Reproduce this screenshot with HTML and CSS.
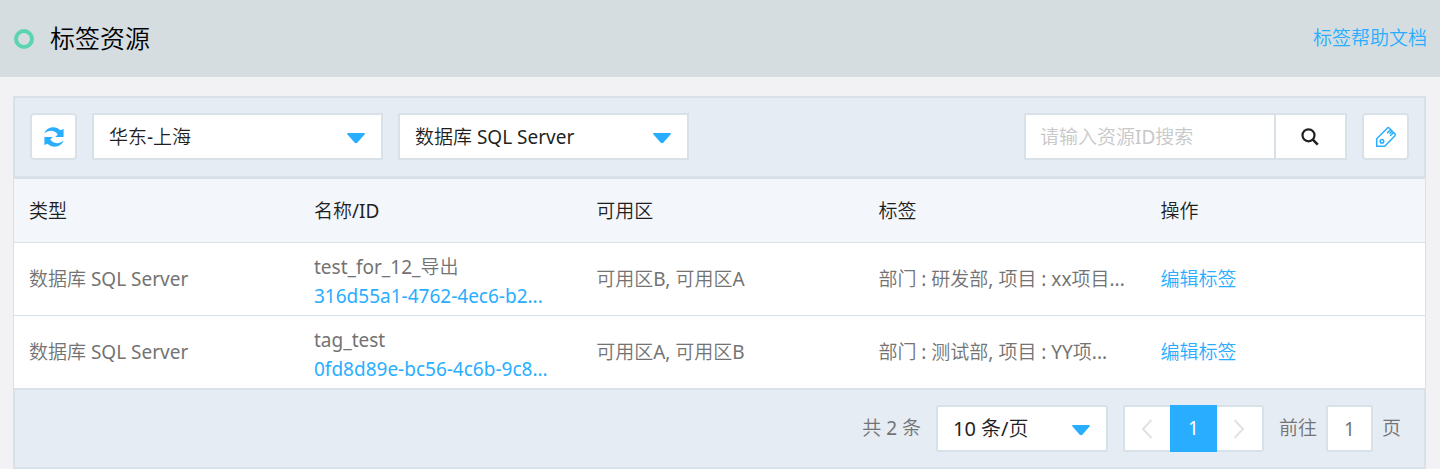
FILE: index.html
```html
<!DOCTYPE html>
<html lang="zh-CN">
<head>
<meta charset="utf-8">
<title>标签资源</title>
<link rel="stylesheet" href="styles.css">
</head>
<body>
<header class="page-header">
  <span class="ring"></span>
  <h1 class="title">标签资源</h1>
  <a class="link" href="#help">标签帮助文档</a>
</header>
<main class="content">
  <div class="toolbar">
    <button class="icon-button" type="button" aria-label="刷新">
      <svg width="20" height="20" viewBox="0 0 20 20" fill="currentColor"><path d="M.3 6.500C2 2.500 5.200.3 9.200.3c2.800 0 5.200 1 7.200 2.900L19.600 2v8h-8.400l2.600-2.600C10.500 3 5 2.700.3 6.500z"/><path d="M19.700 13.500c-1.700 4-4.900 6.200-8.900 6.200-2.800 0-5.200-1-7.200-2.900L.4 18v-8h8.400l-2.600 2.600c3.300 4.400 8.800 4.700 13.500.9z"/></svg>
    </button>
    <div class="select-box region-box">
      <select class="select" aria-label="地域"><option>华东-上海</option></select>
      <svg class="caret" width="18" height="11" viewBox="0 0 18 11"><path d="M1 0h16q1.500 0 .5 1.500L10.500 9.500q-1.500 1.500-3 0L.5 1.500Q-.5 0 1 0z"/></svg>
    </div>
    <div class="select-box region-box">
      <select class="select" aria-label="资源类型"><option>数据库 SQL Server</option></select>
      <svg class="caret" width="18" height="11" viewBox="0 0 18 11"><path d="M1 0h16q1.500 0 .5 1.500L10.500 9.500q-1.500 1.500-3 0L.5 1.500Q-.5 0 1 0z"/></svg>
    </div>
    <form class="search">
      <input class="search-input" type="text" aria-label="资源ID" placeholder="请输入资源ID搜索">
      <button class="search-button" type="button" aria-label="搜索">
        <svg width="18" height="18" viewBox="0 0 18 18" fill="none" stroke="currentColor"><circle cx="7.500" cy="7.300" r="6" stroke-width="2.200"/><path d="M11.800 11.600l5 5" stroke-width="2.600"/></svg>
      </button>
    </form>
    <button class="icon-button" type="button" aria-label="标签管理">
      <svg width="22" height="22" viewBox="0 0 22 22" fill="none" stroke="currentColor" stroke-width="1.500" stroke-linejoin="round" stroke-linecap="round"><path d="M1.700 20.300v-7.500L12.500 2q.8-.8 1.600 0l5.900 6q.8.900 0 1.700L9.700 20.300z"/><circle cx="7" cy="15.200" r="1.800"/><path d="M15.400 3.800l-2.800 2.800M16.600 5.600l-1.700 1.700M18.300 6.700l-2.800 2.800"/></svg>
    </button>
  </div>
  <table class="table">
    <thead>
      <tr><th class="col-type">类型</th><th class="col">名称/ID</th><th class="col">可用区</th><th class="col">标签</th><th>操作</th></tr>
    </thead>
    <tbody>
      <tr>
        <td>数据库 SQL Server</td>
        <td class="name">test_for_12_导出<br><a class="link" href="#r1">316d55a1-4762-4ec6-b2...</a></td>
        <td>可用区B, 可用区A</td>
        <td>部门 : 研发部, 项目 : xx项目...</td>
        <td><a class="link" href="#edit1">编辑标签</a></td>
      </tr>
      <tr>
        <td>数据库 SQL Server</td>
        <td class="name">tag_test<br><a class="link" href="#r2">0fd8d89e-bc56-4c6b-9c8...</a></td>
        <td>可用区A, 可用区B</td>
        <td>部门 : 测试部, 项目 : YY项...</td>
        <td><a class="link" href="#edit2">编辑标签</a></td>
      </tr>
    </tbody>
  </table>
  <nav class="pagination" aria-label="分页">
    <span>共 2 条</span>
    <div class="select-box size-box">
      <select class="select size-select" aria-label="每页条数"><option>10 条/页</option></select>
      <svg class="caret" width="18" height="11" viewBox="0 0 18 11"><path d="M1 0h16q1.500 0 .5 1.500L10.500 9.500q-1.500 1.500-3 0L.5 1.500Q-.5 0 1 0z"/></svg>
    </div>
    <div class="pager">
      <button class="page-button prev" type="button" aria-label="上一页"><svg width="12" height="20" viewBox="0 0 12 20" fill="none" stroke="currentColor" stroke-width="2"><path d="M10.500 1L2 10l8.500 9"/></svg></button>
      <button class="page-button current" type="button">1</button>
      <button class="page-button next" type="button" aria-label="下一页"><svg width="12" height="20" viewBox="0 0 12 20" fill="none" stroke="currentColor" stroke-width="2"><path d="M1.500 1L10 10l-8.500 9"/></svg></button>
    </div>
    <div class="jump">
      <label for="page">前往</label>
      <input class="page-input" id="page" type="text" value="1">
      <span>页</span>
    </div>
  </nav>
</main>
</body>
</html>
```
FILE: styles.css
```css
* { box-sizing: border-box; }
body {
  margin: 0;
  background: #f2f2f4;
  color: #737373;
  font: 400 19px/29px "Noto Sans", "Noto Sans CJK SC DemiLight", "Noto Sans CJK SC", sans-serif;
}
button, input, select { font: inherit; color: inherit; }
.link { color: #29aeff; text-decoration: none; }
.page-header {
  display: flex;
  align-items: center;
  height: 77px;
  padding: 0 13px 0 14px;
  background: #d5dde0;
}
.ring {
  width: 20px;
  height: 20px;
  margin-right: 16px;
  border: 4px solid #5bd5b1;
  border-radius: 50%;
}
.title {
  margin: 0 auto 0 0;
  padding-bottom: 2px;
  color: #000;
  font-size: 25px;
  font-weight: 400;
  line-height: 36px;
}
.content { padding: 19px 14px 0 13px; }
.toolbar {
  display: flex;
  align-items: flex-start;
  gap: 15px;
  padding: 15px 15px 16px;
  border: 2px solid #d9e1e8;
  background: #e5ecf4;
}
.icon-button {
  display: flex;
  align-items: center;
  justify-content: center;
  width: 47px;
  height: 47px;
  padding: 0;
  border: 2px solid #d9e1e8;
  border-radius: 4px;
  background: #fff;
  color: #29aeff;
}
.select-box { position: relative; }
.region-box { width: 291px; }
.select {
  width: 100%;
  height: 47px;
  padding: 2px 15px 0;
  border: 2px solid #d9e1e8;
  border-radius: 0;
  background: #fff;
  color: #1f1f1f;
  appearance: none;
}
.caret {
  position: absolute;
  top: 20px;
  right: 18px;
  fill: #29aeff;
  pointer-events: none;
}
.search { display: flex; margin-left: auto; }
.search-input {
  width: 250px;
  height: 47px;
  padding: 0 14px;
  border: 2px solid #d9e1e8;
  border-right: 0;
  border-radius: 0;
  background: #fff;
}
.search-input::placeholder { color: #c8c8c8; }
.search-button {
  display: flex;
  align-items: center;
  justify-content: center;
  width: 73px;
  padding: 0 2px 0 0;
  border: 2px solid #d9e1e8;
  background: #fff;
  color: #1f1f1f;
}
.table {
  width: 100%;
  border: 1px solid #d9e1e8;
  border-bottom: 0;
  border-spacing: 0;
  table-layout: fixed;
  background: #fff;
}
.table th, .table td {
  padding: 0 15px;
  border-bottom: 1px solid #d9e1e8;
  text-align: left;
  font-weight: 400;
  white-space: nowrap;
}
.table th {
  height: 64px;
  padding-top: 2px;
  background: #f3f6fb;
  color: #1f1f1f;
}
.table td { height: 73px; }
.table .name { padding-top: 6px; }
.table tbody tr:last-child td { height: 72px; border-bottom: 0; }
.col-type { width: 285px; }
.col { width: 20%; }
.pagination {
  display: flex;
  align-items: center;
  justify-content: flex-end;
  gap: 15px;
  padding: 15px 23px 15px 15px;
  border: 2px solid #d9e1e8;
  background: #e5ecf4;
}
.size-box { width: 172px; }
.size-select { padding-top: 0; border-radius: 3px; font-size: 20px; }
.pager { display: flex; }
.page-button {
  display: flex;
  align-items: center;
  justify-content: center;
  width: 47px;
  height: 47px;
  padding: 0;
  border: 2px solid #d9e1e8;
  background: #fff;
  color: #e0e2e6;
}
.prev { border-right: 0; border-radius: 3px 0 0 3px; }
.next { border-left: 0; border-radius: 0 3px 3px 0; }
.current { border-color: #29aeff; background: #29aeff; color: #fff; }
.jump { display: flex; align-items: center; gap: 9px; }
.page-input {
  width: 47px;
  height: 47px;
  padding: 0;
  border: 2px solid #d9e1e8;
  border-radius: 3px;
  background: #fff;
  text-align: center;
}
```
